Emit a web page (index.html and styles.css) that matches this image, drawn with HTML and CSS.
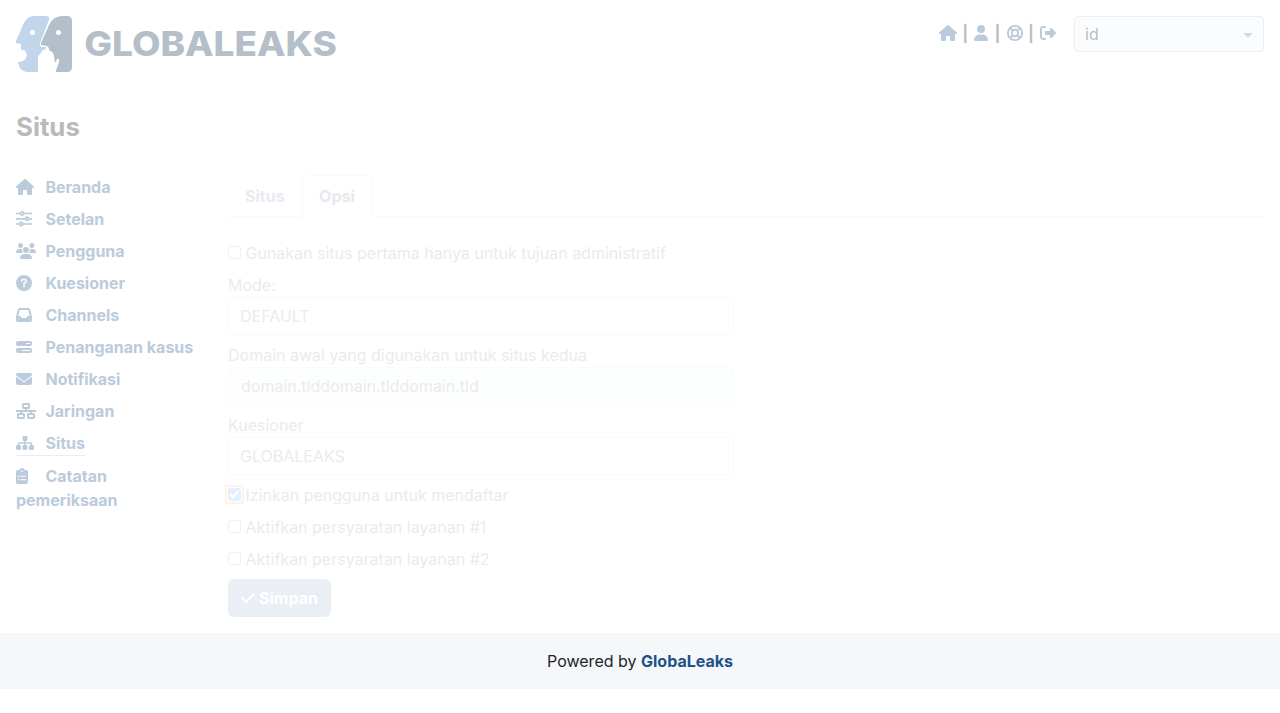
FILE: index.html
```html
<!DOCTYPE html>
<html lang="id">
<head>
<meta charset="utf-8">
<title>Situs</title>
<link rel="stylesheet" href="styles.css">
</head>
<body>
<svg class="defs" width="0" height="0">
  <symbol id="house" viewBox="0 0 576 512"><path d="M575.8 255.5c0 18-15 32.1-32 32.1h-32l.7 160.2c0 2.7-.2 5.4-.5 8.1V472c0 22.1-17.9 40-40 40H392c-22.1 0-40-17.9-40-40V384c0-17.700-14.300-32-32-32H256c-17.700 0-32 14.300-32 32v88c0 22.1-17.9 40-40 40H104c-22.1 0-40-17.9-40-40V287.6H32c-18 0-32-14-32-32.1c0-9 3-17 10-24L266.4 8c7-7 15-8 22-8s15 2 21 7L564.8 231.5c8 7 12 15 11 24z"/></symbol>
</svg>
<header class="header">
  <svg class="logo" viewBox="0 0 320 56">
    <path class="logo-light" fill-rule="evenodd" d="M17 0H30Q34 0 33 4L24 27Q23 30 26 31H30V33Q25 34 25 37L22 40V56H11Q3 55 2 46Q8 46 10 42Q12 37 8 34H5V28L0 27V25L7 9Q10 1 17 0ZM16.500 14A2.500 2.500 0 1 0 16.500 19A2.500 2.500 0 1 0 16.500 14Z"/>
    <path class="logo-dark" fill-rule="evenodd" d="M47 0H51Q56 0 56 5V51Q56 56 51 56H39.500L43 46Q44 42 41 43L39 47Q38.500 45 38 40Q37 35 33.500 35Q33 31 31 30L25 29V27L33 9Q37 0 47 0ZM42.500 14A2.500 2.500 0 1 0 42.500 19A2.500 2.500 0 1 0 42.500 14Z"/>
    <text class="logo-text" x="68.300" y="40" textLength="252.500" lengthAdjust="spacingAndGlyphs">GLOBALEAKS</text>
  </svg>
  <div class="tools">
    <svg class="icon w18"><use href="#house"/></svg><span class="bar">|</span>
    <svg class="icon w14" viewBox="0 0 448 512"><path d="M224 256A128 128 0 1 0 224 0a128 128 0 1 0 0 256zm-45.700 48C79.800 304 0 383.800 0 482.300C0 498.700 13.300 512 29.700 512H418.300c16.400 0 29.700-13.300 29.700-29.700C448 383.800 368.200 304 269.700 304H178.300z"/></svg><span class="bar wide">|</span>
    <svg class="icon line ring" viewBox="0 0 16 16"><circle cx="8" cy="8" r="7.100"/><circle cx="8" cy="8" r="3.200"/><path d="M3 3l2.700 2.700M13 3l-2.700 2.700M3 13l2.700-2.700M13 13l-2.700-2.700"/></svg><span class="bar">|</span>
    <svg class="icon" viewBox="0 0 512 512"><path d="M377.900 105.900L500.700 228.700c7.200 7.200 11.300 17.100 11.300 27.300s-4.100 20.100-11.300 27.300L377.900 406.100c-6.400 6.400-15 9.900-24 9.900c-18.700 0-33.900-15.200-33.900-33.900V320H192c-17.700 0-32-14.300-32-32V224c0-17.700 14.300-32 32-32H320V129.900c0-18.700 15.200-33.900 33.900-33.900c9 0 17.600 3.600 24 9.900zM160 96H96c-17.700 0-32 14.300-32 32V384c0 17.700 14.300 32 32 32h64c17.700 0 32 14.300 32 32s-14.300 32-32 32H96c-53 0-96-43-96-96V128C0 75 43 32 96 32h64c17.700 0 32 14.300 32 32s-14.300 32-32 32z"/></svg>
    <div class="lang"><span>id</span><i class="caret"></i></div>
  </div>
</header>
<h1 class="title">Situs</h1>
<div class="layout">
  <nav class="side">
    <a><span class="slot"><svg class="icon w18"><use href="#house"/></svg></span>Beranda</a>
    <a><span class="slot"><svg class="icon line" viewBox="0 0 16 16"><path d="M0 2.500h4.500M8 2.500h8M0 7.800h9M13 7.800h3M0 13h3M7 13h9"/><circle cx="6.200" cy="2.500" r="1.600"/><circle cx="11" cy="7.800" r="1.600"/><circle cx="5" cy="13" r="1.600"/></svg></span>Setelan</a>
    <a><span class="slot"><svg class="icon w20" viewBox="0 0 640 512"><path d="M144 0a80 80 0 1 1 0 160A80 80 0 1 1 144 0zM512 0a80 80 0 1 1 0 160A80 80 0 1 1 512 0zM0 298.700C0 239.800 47.800 192 106.700 192h42.700c15.900 0 31 3.500 44.600 9.700c-1.300 7.200-1.900 14.700-1.900 22.300c0 38.200 16.800 72.500 43.300 96H21.300C9.600 320 0 310.400 0 298.700zM405.300 320h-.7c26.600-23.500 43.300-57.800 43.300-96c0-7.600-.7-15-1.900-22.300c13.600-6.300 28.700-9.700 44.600-9.700h42.700C592.200 192 640 239.800 640 298.700c0 11.800-9.600 21.300-21.300 21.300H405.300zM224 224a96 96 0 1 1 192 0 96 96 0 1 1-192 0zM128 485.300C128 411.700 187.700 352 261.300 352H378.700C452.300 352 512 411.700 512 485.300c0 14.700-11.900 26.700-26.700 26.700H154.700c-14.700 0-26.700-11.900-26.700-26.700z"/></svg></span>Pengguna</a>
    <a><span class="slot"><svg class="icon" viewBox="0 0 16 16"><circle cx="8" cy="8" r="8"/><path class="cut" d="M5.600 5.900q.1-1.300 1.500-1.300h1.500q1.600 0 1.600 1.600 0 .9-.9 1.400L8 8.300v.9"/><circle class="dot" cx="8" cy="11.300" r="1"/></svg></span>Kuesioner</a>
    <a><span class="slot"><svg class="icon" viewBox="0 0 512 512"><path d="M121 32C91.600 32 66 52 58.900 80.500L1.900 308.400C.6 313.500 0 318.700 0 323.900V416c0 35.300 28.700 64 64 64H448c35.300 0 64-28.700 64-64V323.900c0-5.200-.6-10.400-1.900-15.500l-57-227.900C446 52 420.400 32 391 32H121zm0 64H391l48 192H387.800c-12.100 0-23.200 6.800-28.600 17.700l-14.300 28.600c-5.400 10.800-16.500 17.700-28.600 17.700H195.800c-12.100 0-23.200-6.800-28.600-17.700l-14.300-28.600c-5.400-10.800-16.500-17.700-28.600-17.700H73L121 96z"/></svg></span>Channels</a>
    <a><span class="slot"><svg class="icon" viewBox="0 0 16 16"><path fill-rule="evenodd" d="M2 2H14a2 2 0 0 1 2 2V5a2 2 0 0 1-2 2H2A2 2 0 0 1 0 5V4A2 2 0 0 1 2 2ZM10 4V5H14V4ZM2 9H14a2 2 0 0 1 2 2V12a2 2 0 0 1-2 2H2A2 2 0 0 1 0 12V11A2 2 0 0 1 2 9ZM6 11V12H14V11Z"/></svg></span>Penanganan kasus</a>
    <a><span class="slot"><svg class="icon" viewBox="0 0 512 512"><path d="M48 64C21.500 64 0 85.500 0 112c0 15.100 7.100 29.300 19.200 38.400L236.800 313.600c11.400 8.500 27 8.500 38.400 0L492.800 150.400c12.100-9.100 19.200-23.300 19.200-38.400c0-26.500-21.500-48-48-48H48zM0 176V384c0 35.300 28.700 64 64 64H448c35.300 0 64-28.700 64-64V176L294.400 339.200c-22.800 17.100-54 17.100-76.800 0L0 176z"/></svg></span>Notifikasi</a>
    <a><span class="slot"><svg class="icon w20 line thick" viewBox="0 0 20 16"><rect x="7" y="1" width="6" height="4" rx=".6"/><rect x="2" y="11" width="6" height="4" rx=".6"/><rect x="12" y="11" width="6" height="4" rx=".6"/><path d="M0 8H20M10 5V8M5 8v3M15 8v3"/></svg></span>Jaringan</a>
    <a class="current"><span class="slot"><svg class="icon w18" viewBox="0 0 18 16"><rect x="6.500" y="1" width="5" height="5" rx="1.400"/><rect x="0" y="10" width="5" height="5" rx="1.400"/><rect x="6.500" y="10" width="5" height="5" rx="1.400"/><rect x="13" y="10" width="5" height="5" rx="1.400"/><path class="wire" d="M9 5v6M2.600 11V8.700q0-.8.8-.8H14.600q.8 0 .8.800V11"/></svg></span>Situs</a>
    <a><span class="slot"><svg class="icon w12" viewBox="0 0 12 16"><path fill-rule="evenodd" d="M2 2H3.200A3 3 0 0 1 8.800 2H10a2 2 0 0 1 2 2V14a2 2 0 0 1-2 2H2a2 2 0 0 1-2-2V4A2 2 0 0 1 2 2ZM6 2.200a.8.800 0 1 0 .01 0ZM2 7.800v1.200h1.300V7.800ZM4.500 7.800v1H10v-1ZM2 11v1.200h1.300V11ZM4.500 11.200v1H10v-1Z"/></svg></span>Catatan pemeriksaan</a>
  </nav>
  <main class="main">
    <div class="tabs"><a class="tab">Situs</a><a class="tab active">Opsi</a></div>
    <div class="form">
      <label class="check"><input type="checkbox">Gunakan situs pertama hanya untuk tujuan administratif</label>
      <div class="field"><label>Mode:</label><div class="control">DEFAULT</div></div>
      <div class="field"><label>Domain awal yang digunakan untuk situs kedua</label><div class="control valid">domain.tlddomain.tlddomain.tld</div></div>
      <div class="field"><label>Kuesioner</label><div class="control">GLOBALEAKS</div></div>
      <label class="check"><input class="focus" type="checkbox" checked>Izinkan pengguna untuk mendaftar</label>
      <label class="check"><input type="checkbox">Aktifkan persyaratan layanan #1</label>
      <label class="check"><input type="checkbox">Aktifkan persyaratan layanan #2</label>
      <div class="save"><svg class="w14" viewBox="0 0 448 512"><path d="M438.600 105.400c12.500 12.500 12.500 32.800 0 45.300l-256 256c-12.500 12.500-32.800 12.500-45.300 0l-128-128c-12.500-12.500-12.500-32.800 0-45.300s32.800-12.500 45.300 0L160 338.700 393.400 105.400c12.500-12.500 32.800-12.500 45.300 0z"/></svg>Simpan</div>
    </div>
  </main>
</div>
<footer class="footer">Powered by&nbsp;<b>GlobaLeaks</b></footer>
</body>
</html>
```
FILE: styles.css
```css
* { box-sizing: border-box; }
body { margin: 0; background: #fff; font: 16px/24px Inter, sans-serif; color: #212529; }
.defs { display: block; }
.header { display: flex; justify-content: space-between; padding: 16px; height: 88px; }
.logo { width: 320px; height: 56px; overflow: visible; }
.logo-light { fill: #c1d6ea; }
.logo-dark { fill: #b4bfca; }
.logo-text { font: 800 34.5px Inter, sans-serif; fill: #b4bfca; }
.tools { display: flex; align-items: flex-start; }
.icon { width: 16px; height: 16px; fill: #bbcbdb; flex: none; display: block; }
.tools .icon { margin-top: 9px; }
.w12 { width: 12px; }
.w14 { width: 14px; }
.w18 { width: 18px; }
.w20 { width: 20px; }
.line { fill: none; stroke: #bbcbdb; stroke-width: 1.7; }
.ring { stroke-width: 1.9; }
.thick { stroke-width: 2; }
.cut { fill: none; stroke: #fff; stroke-width: 1.5; stroke-linecap: round; }
.dot { fill: #fff; }
.wire { fill: none; stroke: #bbcbdb; stroke-width: 1.5; }
.bar { width: 17.2px; margin-top: 5px; padding-right: 1px; text-align: center; font-weight: 700; color: #bcbdbf; }
.bar.wide { width: 18.6px; padding-right: 0; }
.lang { display: flex; align-items: center; justify-content: space-between; width: 190px; height: 36px; margin-left: 18px; padding: 0 10px; border: 1px solid #edeeef; border-radius: 4px; background: #fbfcfe; color: #bcbdbf; }
.caret { border: 5px solid transparent; border-top-color: #d9d9d9; border-bottom: 0; margin-top: 2px; }
.title { margin: 23px 16px 32px; font-size: 25.8px; line-height: 32px; font-weight: 700; color: #b9babc; }
.layout { display: grid; grid-template-columns: 192px 1fr; column-gap: 20px; padding: 0 0 16px 16px; }
.side { display: flex; flex-direction: column; align-items: flex-start; gap: 8px; font-weight: 700; color: #bbcbdb; }
.side a { display: block; }
.slot { display: inline-block; width: 29.45px; height: 16px; vertical-align: -2px; }
.current { border-bottom: 1px solid #ebebf7; }
.main { color: #ebebec; }
.tabs { display: flex; height: 42px; margin-right: 16px; border-bottom: 1px solid #fafafb; font-weight: 700; color: #e8ebf1; }
.tab { height: 42px; padding: 9px 17px; }
.tab.active { padding: 8px 17px 8px 16.5px; border: 1px solid #fafafb; border-bottom-color: #fff; border-radius: 6px 6px 0 0; color: #e6eaee; background: #fff; }
.form { display: flex; flex-direction: column; align-items: flex-start; gap: 8px; padding-top: 24px; }
.check { display: flex; height: 24px; }
.check input { width: 13px; height: 13px; margin: 5px 4.5px 0 0; opacity: .1; }
.check .focus { outline: 2px solid #ff9a00; outline-offset: 1px; border-radius: 2px; }
.field { width: 506px; }
.field label { display: block; }
.control { height: 38px; padding: 6px 11px; border: 1px solid #fafafa; border-radius: 5px; }
.valid { padding-left: 12px; border-color: #f8fcfa; background: #fdfffe; }
.save { display: flex; align-items: center; gap: 4px; width: 103px; height: 38px; padding-left: 13px; border-radius: 6px; background: #eaeff6; color: #fff; font-weight: 700; }
.save svg { height: 16px; fill: #fff; }
.footer { display: flex; align-items: center; justify-content: center; height: 56px; background: #f5f7fb; color: #212529; }
.footer b { font-weight: 700; color: #1d5288; }
```
